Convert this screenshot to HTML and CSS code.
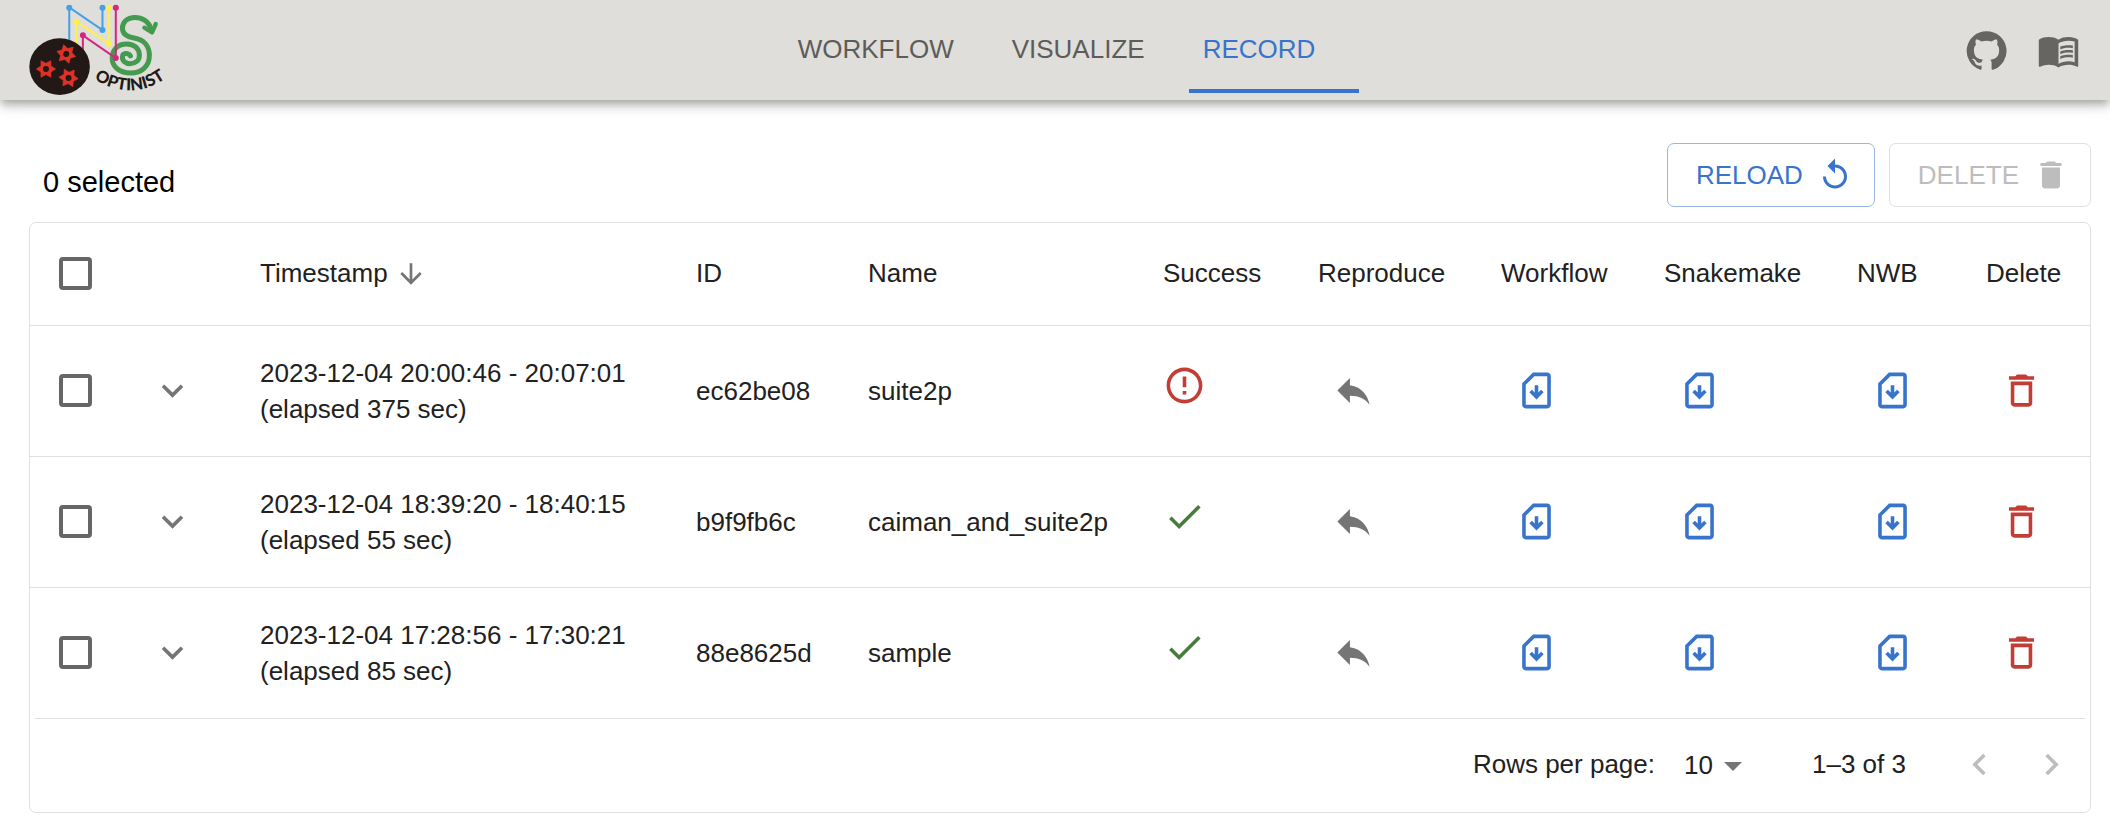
FILE: index.html
```html
<!DOCTYPE html>
<html lang="en">
<head>
<meta charset="utf-8">
<title>OptiNiSt - Record</title>
<link rel="stylesheet" href="styles.css">
</head>
<body>
<svg class="sprite" aria-hidden="true">
  <symbol id="expand" viewBox="0 0 24 24"><path d="M7.41 8.59 12 13.17l4.59-4.58L18 10l-6 6-6-6z"/></symbol>
  <symbol id="sort" viewBox="0 0 24 24"><path d="M20 12l-1.41-1.41L13 16.17V4h-2v12.17l-5.58-5.59L4 12l8 8 8-8z"/></symbol>
  <symbol id="error" viewBox="0 0 24 24"><path d="M11 15h2v2h-2zm0-8h2v6h-2zm.99-5C6.47 2 2 6.48 2 12s4.47 10 9.99 10C17.52 22 22 17.52 22 12S17.52 2 11.99 2zM12 20c-4.42 0-8-3.58-8-8s3.58-8 8-8 8 3.58 8 8-3.58 8-8 8z"/></symbol>
  <symbol id="done" viewBox="0 0 24 24"><path d="M9 16.2 4.8 12l-1.4 1.4L9 19 21 7l-1.4-1.4L9 16.2z"/></symbol>
  <symbol id="reply" viewBox="0 0 24 24"><path d="M10 9V5l-7 7 7 7v-4.1c5 0 8.5 1.6 11 5.1-1-5-4-10-11-11z"/></symbol>
  <symbol id="download" viewBox="0 0 24 24"><path d="M18 2h-8L4 8v12c0 1.100.9 2 2 2h12c1.100 0 2-.9 2-2V4c0-1.100-.9-2-2-2zm0 18H6V8.830L10.830 4H18v16z"/><path d="M12 17l4-4-1.410-1.410L13 13.170V9h-2v4.170l-1.590-1.580L8 13z"/></symbol>
  <symbol id="trash-outline" viewBox="0 0 24 24"><path d="M6 19c0 1.100.9 2 2 2h8c1.100 0 2-.9 2-2V7H6v12zM8 9h8v10H8V9zm7.500-5l-1-1h-5l-1 1H5v2h14V4z"/></symbol>
  <symbol id="trash" viewBox="0 0 24 24"><path d="M6 19c0 1.100.9 2 2 2h8c1.100 0 2-.9 2-2V7H6v12zM19 4h-3.500l-1-1h-5l-1 1H5v2h14V4z"/></symbol>
  <symbol id="replay" viewBox="0 0 24 24"><path d="M12 5V1L7 6l5 5V7c3.310 0 6 2.690 6 6s-2.690 6-6 6-6-2.690-6-6H4c0 4.420 3.580 8 8 8s8-3.580 8-8-3.580-8-8-8z"/></symbol>
  <symbol id="left" viewBox="0 0 24 24"><path d="M15.410 16.590 10.830 12l4.580-4.590L14 6l-6 6 6 6z"/></symbol>
  <symbol id="right" viewBox="0 0 24 24"><path d="M8.590 16.590 13.170 12 8.590 7.410 10 6l6 6-6 6z"/></symbol>
  <symbol id="gear" viewBox="-30 -30 60 60" overflow="visible"><path d="M29 0 15 9 15 25 0 17-15 25-15 9-29 0-15-9-15-25 0-17 15-25 15-9z" fill="#e03127" stroke="#e03127" stroke-width="2" stroke-linejoin="round"/><circle r="9" fill="#221815"/></symbol>
</svg>

<header class="topbar">
  <a class="logo" href="#" aria-label="OptiNiSt home">
    <svg viewBox="80 0 430 300">
      <g fill="none" stroke-width="6">
        <path d="M207 140V22L307 90V22" stroke="#45a0e6"/>
        <path d="M228 160V65L327 131V22" stroke="#fff04a"/>
      </g>
      <g fill="#45a0e6"><circle cx="207" cy="23" r="9"/><circle cx="307" cy="90" r="9"/><circle cx="307" cy="23" r="9"/></g>
      <g fill="#fff04a"><circle cx="228" cy="65" r="9"/><circle cx="327" cy="131" r="9"/><circle cx="327" cy="23" r="9"/></g>
      <path d="M453 88C446 62 424 52 405 52C380 52 366 68 367 86C368 103 382 111 402 114C432 119 448 138 448 166C448 200 424 219 392 219C360 219 336 202 336 174C336 148 354 132 380 132C403 132 418 146 418 166C418 182 406 191 390 191C375 191 366 182 367 170C368 158 385 158 391 168" fill="none" stroke="#449b50" stroke-width="15" stroke-linecap="round"/>
      <path d="M433 83 456 97 467 72" fill="none" stroke="#449b50" stroke-width="13" stroke-linecap="round" stroke-linejoin="round"/>
      <path d="M248 170V106L347 174V22" fill="none" stroke="#d4267f" stroke-width="6"/>
      <g fill="#d4267f"><circle cx="248" cy="106" r="9"/><circle cx="347" cy="174" r="9"/><circle cx="347" cy="23" r="9"/></g>
      <ellipse cx="178" cy="200" rx="91" ry="85" fill="#221815"/>
      <use href="#gear" x="-30" y="-30" width="60" height="60" transform="translate(198 162) rotate(15)"/>
      <use href="#gear" x="-30" y="-30" width="60" height="60" transform="translate(137 207)"/>
      <use href="#gear" x="-30" y="-30" width="60" height="60" transform="translate(205 234) rotate(5)"/>
      <path id="arc" d="M268 228Q395 316 510 225" fill="none"/>
      <text class="logo-text"><textPath href="#arc" startOffset="50%" text-anchor="middle">OPTINIST</textPath></text>
    </svg>
  </a>
  <nav class="tabs">
    <a class="tab" href="#workflow">WORKFLOW</a>
    <a class="tab" href="#visualize">VISUALIZE</a>
    <a class="tab active" href="#record" aria-current="page">RECORD</a>
  </nav>
  <div class="links">
    <a href="#github" aria-label="GitHub"><svg class="icon" viewBox="0 0 24 24"><path d="M12 1.270a11 11 0 00-3.480 21.460c.55.090.73-.28.73-.55v-1.840c-3.030.64-3.670-1.460-3.670-1.460-.55-1.290-1.280-1.650-1.280-1.650-.92-.65.1-.65.1-.65 1.100 0 1.730 1.100 1.730 1.100.92 1.650 2.570 1.200 3.210.92a2 2 0 01.64-1.470c-2.470-.27-5.040-1.190-5.040-5.500 0-1.100.46-2.100 1.200-2.840a3.760 3.760 0 010-2.930s.91-.28 3.110 1.100c1.800-.49 3.700-.49 5.500 0 2.100-1.380 3.020-1.100 3.020-1.100a3.760 3.760 0 01.1 2.930c.83.740 1.200 1.740 1.200 2.940 0 4.210-2.570 5.130-5.040 5.400.45.370.82.920.82 2.020v3.030c0 .27.1.64.73.55A11 11 0 0012 1.270"/></svg></a>
    <a href="#docs" aria-label="Documentation"><svg class="icon" viewBox="0 0 24 24"><path d="M21 5c-1.110-.35-2.330-.5-3.500-.5-1.950 0-4.050.4-5.500 1.500-1.450-1.100-3.550-1.500-5.500-1.500S2.450 4.900 1 6v14.650c0 .25.25.5.5.5.1 0 .15-.05.25-.05C3.100 20.450 5.050 20 6.500 20c1.950 0 4.050.4 5.500 1.500 1.350-.85 3.800-1.500 5.500-1.500 1.650 0 3.350.3 4.750 1.050.1.050.15.050.25.050.25 0 .5-.25.5-.5V6c-.6-.45-1.250-.75-2-1zm0 13.500c-1.100-.35-2.300-.5-3.500-.5-1.700 0-4.150.65-5.500 1.500V8c1.350-.85 3.800-1.500 5.500-1.500 1.200 0 2.400.15 3.500.5v11.500z"/><path d="M17.500 10.500c.88 0 1.730.09 2.500.26V9.240c-.79-.15-1.640-.24-2.500-.24-1.700 0-3.240.29-4.500.83v1.660c1.130-.64 2.700-.99 4.500-.99zM13 12.490v1.660c1.130-.64 2.700-.99 4.500-.99.88 0 1.730.09 2.500.26V11.900c-.79-.15-1.640-.24-2.500-.24-1.700 0-3.240.3-4.500.83zM17.500 14.330c-1.700 0-3.240.29-4.500.83v1.660c1.130-.64 2.700-.99 4.500-.99.88 0 1.730.09 2.500.26v-1.520c-.79-.16-1.640-.24-2.500-.24z"/></svg></a>
  </div>
</header>

<main class="page">
  <div class="toolbar">
    <p class="selected">0 selected</p>
    <div class="actions">
      <button class="btn" type="button">RELOAD<svg class="icon-btn"><use href="#replay"/></svg></button>
      <button class="btn" type="button" disabled>DELETE<svg class="icon-btn"><use href="#trash"/></svg></button>
    </div>
  </div>

  <section class="card">
    <table class="records">
      <colgroup>
        <col class="c-check"><col class="c-expand"><col class="c-time"><col class="c-id"><col><col class="c-success"><col class="c-reproduce"><col class="c-workflow"><col class="c-snake"><col class="c-nwb"><col class="c-delete">
      </colgroup>
      <thead>
        <tr>
          <th><input type="checkbox" aria-label="Select all"></th>
          <th></th>
          <th aria-sort="descending"><button class="sort" type="button">Timestamp<svg><use href="#sort"/></svg></button></th>
          <th>ID</th><th>Name</th><th>Success</th><th>Reproduce</th><th>Workflow</th><th>Snakemake</th><th>NWB</th><th>Delete</th>
        </tr>
      </thead>
      <tbody>
        <tr>
          <td><input type="checkbox" aria-label="Select suite2p"></td>
          <td class="expand"><button type="button" aria-label="Expand"><svg class="icon"><use href="#expand"/></svg></button></td>
          <td>2023-12-04 20:00:46 - 20:07:01<br>(elapsed 375 sec)</td>
          <td>ec62be08</td>
          <td>suite2p</td>
          <td class="status error"><svg class="icon" role="img" aria-label="Error"><use href="#error"/></svg></td>
          <td class="act"><button type="button" aria-label="Reproduce"><svg class="icon"><use href="#reply"/></svg></button></td>
          <td class="act blue"><button type="button" aria-label="Download workflow"><svg class="icon"><use href="#download"/></svg></button></td>
          <td class="act blue"><button type="button" aria-label="Download Snakemake"><svg class="icon"><use href="#download"/></svg></button></td>
          <td class="act blue"><button type="button" aria-label="Download NWB"><svg class="icon"><use href="#download"/></svg></button></td>
          <td class="act red"><button type="button" aria-label="Delete"><svg class="icon"><use href="#trash-outline"/></svg></button></td>
        </tr>
        <tr>
          <td><input type="checkbox" aria-label="Select caiman_and_suite2p"></td>
          <td class="expand"><button type="button" aria-label="Expand"><svg class="icon"><use href="#expand"/></svg></button></td>
          <td>2023-12-04 18:39:20 - 18:40:15<br>(elapsed 55 sec)</td>
          <td>b9f9fb6c</td>
          <td>caiman_and_suite2p</td>
          <td class="status done"><svg class="icon" role="img" aria-label="Success"><use href="#done"/></svg></td>
          <td class="act"><button type="button" aria-label="Reproduce"><svg class="icon"><use href="#reply"/></svg></button></td>
          <td class="act blue"><button type="button" aria-label="Download workflow"><svg class="icon"><use href="#download"/></svg></button></td>
          <td class="act blue"><button type="button" aria-label="Download Snakemake"><svg class="icon"><use href="#download"/></svg></button></td>
          <td class="act blue"><button type="button" aria-label="Download NWB"><svg class="icon"><use href="#download"/></svg></button></td>
          <td class="act red"><button type="button" aria-label="Delete"><svg class="icon"><use href="#trash-outline"/></svg></button></td>
        </tr>
        <tr>
          <td><input type="checkbox" aria-label="Select sample"></td>
          <td class="expand"><button type="button" aria-label="Expand"><svg class="icon"><use href="#expand"/></svg></button></td>
          <td>2023-12-04 17:28:56 - 17:30:21<br>(elapsed 85 sec)</td>
          <td>88e8625d</td>
          <td>sample</td>
          <td class="status done"><svg class="icon" role="img" aria-label="Success"><use href="#done"/></svg></td>
          <td class="act"><button type="button" aria-label="Reproduce"><svg class="icon"><use href="#reply"/></svg></button></td>
          <td class="act blue"><button type="button" aria-label="Download workflow"><svg class="icon"><use href="#download"/></svg></button></td>
          <td class="act blue"><button type="button" aria-label="Download Snakemake"><svg class="icon"><use href="#download"/></svg></button></td>
          <td class="act blue"><button type="button" aria-label="Download NWB"><svg class="icon"><use href="#download"/></svg></button></td>
          <td class="act red"><button type="button" aria-label="Delete"><svg class="icon"><use href="#trash-outline"/></svg></button></td>
        </tr>
      </tbody>
    </table>
    <div class="pagination">
      <label for="rows">Rows per page:</label>
      <span class="select"><select id="rows"><option>10</option><option>25</option><option>50</option></select></span>
      <span class="range">1–3 of 3</span>
      <button type="button" disabled aria-label="Previous page"><svg class="icon"><use href="#left"/></svg></button>
      <button type="button" disabled aria-label="Next page"><svg class="icon"><use href="#right"/></svg></button>
    </div>
  </section>
</main>
</body>
</html>
```
FILE: styles.css
```css
:root {
  --blue: #3874cb;
  --red: #c23d34;
  --green: #467d3c;
  --line: #e0e0e0;
  --text: #212121;
  --gray: #757575;
}

* { box-sizing: border-box; }

body {
  margin: 0;
  background: #fff;
  color: var(--text);
  font-family: "Liberation Sans", Arial, sans-serif;
  font-size: 26px;
}

button {
  display: block;
  padding: 0;
  border: 0;
  background: none;
  color: inherit;
  font: inherit;
}

svg { display: block; fill: currentColor; }
.sprite { position: absolute; width: 0; height: 0; }
.icon { width: 43px; height: 43px; }

/* Header */
.topbar {
  display: grid;
  grid-template-columns: 1fr auto 1fr;
  align-items: center;
  height: 100px;
  padding: 0 30px 0 27px;
  background: #dfdeda;
  box-shadow: 0 4px 7px -2px rgba(0, 0, 0, .2), 0 7px 9px rgba(0, 0, 0, .14), 0 2px 18px rgba(0, 0, 0, .12);
}

.logo svg { width: 143px; height: 100px; }
.logo-text { font: 900 50px Lato, sans-serif; fill: #221815; }

.tabs { display: flex; padding-left: 6px; }

.tab {
  position: relative;
  height: 86px;
  padding: 0 29px;
  line-height: 84px;
  color: #5d5c5a;
  text-decoration: none;
}

.active { color: var(--blue); }

.active::after {
  content: "";
  position: absolute;
  right: -15px;
  bottom: 0;
  width: 100%;
  height: 4px;
  background: var(--blue);
}

.links { display: flex; justify-content: flex-end; gap: 29px; }
.links a { color: #666563; }

/* Page */
.page { padding: 43px 19px 16px 29px; }

.toolbar {
  display: flex;
  justify-content: space-between;
  align-items: center;
  margin-bottom: 15px;
}

.selected {
  margin: 14px 0 0 14px;
  color: #000;
  font-size: 29px;
}

.actions { display: flex; gap: 14px; }

.btn {
  display: flex;
  align-items: center;
  gap: 14px;
  height: 64px;
  padding: 0 21px 0 28px;
  border: 1px solid #97b8e6;
  border-radius: 7px;
  color: var(--blue);
}

.btn:disabled { border-color: var(--line); color: #bdbdbd; }
.icon-btn { width: 36px; height: 36px; }

.card { border: 1px solid var(--line); border-radius: 7px; }

/* Table */
.records {
  width: 100%;
  table-layout: fixed;
  border-collapse: collapse;
}

.c-check { width: 86px; }
.c-expand { width: 115px; }
.c-time { width: 436px; }
.c-id { width: 172px; }
.c-success { width: 155px; }
.c-reproduce { width: 183px; }
.c-workflow { width: 163px; }
.c-snake { width: 193px; }
.c-nwb { width: 129px; }
.c-delete { width: 133px; }

.records th,
.records td {
  padding: 0 0 0 29px;
  text-align: left;
  white-space: nowrap;
}

.records th { height: 102px; font-weight: 400; }
.records td { height: 131px; line-height: 36px; }
.records tr { border-bottom: 1px solid var(--line); }
.records tbody tr:last-child { border-bottom: 0; }

input[type="checkbox"] {
  appearance: none;
  display: block;
  width: 33px;
  height: 33px;
  margin: 0;
  border: 4px solid #666;
  border-radius: 4px;
}

.sort { display: flex; align-items: center; gap: 7px; }
.sort svg { width: 32px; height: 32px; color: var(--gray); }

.records td.expand { padding-left: 35px; color: var(--gray); }
.records td.status { padding-bottom: 11px; }
.error { color: var(--red); }
.done { color: var(--green); }
.act { color: var(--gray); }
.act button { padding: 14px; }
.blue { color: var(--blue); }
.red { color: var(--red); }

/* Pagination */
.pagination {
  display: flex;
  justify-content: flex-end;
  align-items: center;
  height: 94px;
  margin: 0 5px;
  padding: 0 12px 2px 0;
  border-top: 1px solid var(--line);
}

.select { position: relative; margin: 0 70px 0 29px; }

.select::after {
  content: "";
  position: absolute;
  right: 0;
  top: 12px;
  border: 9px solid transparent;
  border-top-color: var(--gray);
  border-bottom: 0;
  pointer-events: none;
}

.select select {
  appearance: none;
  display: block;
  width: 58px;
  padding: 0;
  border: 0;
  background: none;
  color: inherit;
  font: inherit;
}

.range { margin-right: 52px; }
.pagination button { color: #bdbdbd; }
.pagination button + button { margin-left: 29px; }
```
